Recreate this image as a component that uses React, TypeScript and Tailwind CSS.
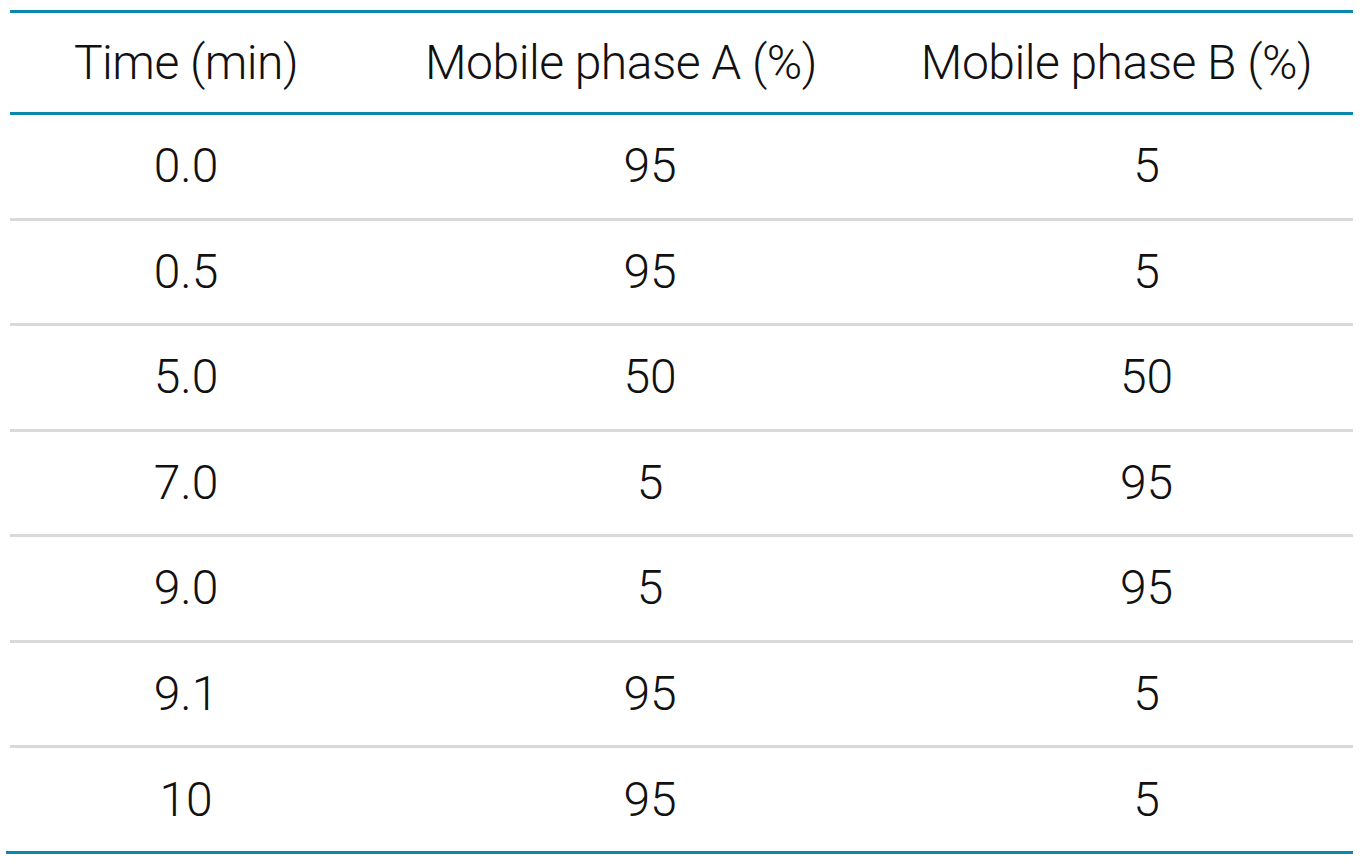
const rows = [
  ["0.0", "95", "5"],
  ["0.5", "95", "5"],
  ["5.0", "50", "50"],
  ["7.0", "5", "95"],
  ["9.0", "5", "95"],
  ["9.1", "95", "5"],
  ["10", "95", "5"],
];

export default function App() {
  return (
    <div className="min-h-screen bg-white pt-[10px] px-[10px] text-[#111] font-light" style={{ fontFamily: "Roboto, 'Liberation Sans', sans-serif" }}>
      <div className="w-[1343px]">
        {/* Header */}
        <div className="flex h-[105px] items-center border-t-[3px] border-b-[3px] border-[#0a89ab] text-[48px] tracking-[-0.5px]">
          <div className="w-[352px] text-center">Time (min)</div>
          <div className="w-[518px] text-center">Mobile phase A (%)</div>
          <div className="flex-1 text-center">Mobile phase B (%)</div>
        </div>

        {/* Body */}
        {rows.map((r, i) => (
          <div
            key={i}
            className={`flex items-center text-[48px] ${
              i < rows.length - 1 ? "h-[105.5px] border-b-[3px] border-[#d9d9d9]" : "h-[103px]"
            }`}
          >
            <div className="w-[352px] text-center">{r[0]}</div>
            <div className="w-[518px] pl-[58px] text-center">{r[1]}</div>
            <div className="flex-1 pl-[60px] text-center">{r[2]}</div>
          </div>
        ))}
        <div className="-ml-[4px] h-[3px] w-[1347px] bg-[#0a89ab]" />
      </div>
    </div>
  );
}
